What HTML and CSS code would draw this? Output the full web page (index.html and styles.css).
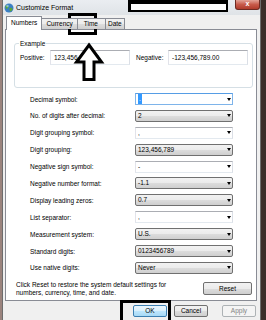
FILE: index.html
```html
<!DOCTYPE html>
<html lang="en">

<head>
    <meta charset="UTF-8">
    <meta name="viewport" content="width=device-width, initial-scale=1.0">
    <title>Customize Format</title>
    <link rel="stylesheet" href="styles.css">
</head>

<body>
    <div class="window">
        <div class="titlebar">
            <svg class="app-icon" width="10" height="10" viewBox="0 0 10 10">
                <circle cx="5" cy="5" r="4.5" fill="#3b7fc4" />
                <path d="M1.5 3 C2.5 1.8 4 2.2 4.6 3.4 C4.2 4.8 3.2 5 2.6 6.2 C2 5.2 1.2 4.2 1.5 3Z" fill="#5aa83a" />
                <path d="M5.4 5 C6.5 4.4 8 4.9 8.6 6 C8.2 7.4 7.1 8.4 6 8.6 C6 7.6 5 6.4 5.4 5Z" fill="#5aa83a" />
                <circle cx="3.5" cy="3" r="1.2" fill="#bfe3ff" opacity="0.6" />
            </svg>
            <span class="title">Customize Format</span>
            <span class="redact"></span>
            <span></span>
            <span class="close">x</span>
        </div>
        <div class="content">
            <div class="tabs">
                <div class="tab active">Numbers</div>
                <div class="tab">Currency</div>
                <div class="tab tab-time">Time</div>
                <div class="tab tab-date">Date</div>
            </div>
            <div class="panel">
                <fieldset class="example">
                    <legend>Example</legend>
                    <div class="example-row">
                        <label>Positive:</label>
                        <div class="text-box">123,456,789.00</div>
                        <label class="neg-label">Negative:</label>
                        <div class="text-box">-123,456,789.00</div>
                    </div>
                </fieldset>
                <div class="settings">
                    <label>Decimal symbol:</label>
                    <div class="combo edit focus"><span class="sel">.</span><span class="caret"></span></div>
                    <label>No. of digits after decimal:</label>
                    <div class="combo list"><span>2</span><span class="caret"></span></div>
                    <label>Digit grouping symbol:</label>
                    <div class="combo edit"><span>,</span><span class="caret"></span></div>
                    <label>Digit grouping:</label>
                    <div class="combo list"><span>123,456,789</span><span class="caret"></span></div>
                    <label>Negative sign symbol:</label>
                    <div class="combo edit"><span>-</span><span class="caret"></span></div>
                    <label>Negative number format:</label>
                    <div class="combo list"><span>-1.1</span><span class="caret"></span></div>
                    <label>Display leading zeros:</label>
                    <div class="combo list"><span>0.7</span><span class="caret"></span></div>
                    <label>List separator:</label>
                    <div class="combo edit"><span>,</span><span class="caret"></span></div>
                    <label>Measurement system:</label>
                    <div class="combo list"><span>U.S.</span><span class="caret"></span></div>
                    <label>Standard digits:</label>
                    <div class="combo list"><span>0123456789</span><span class="caret"></span></div>
                    <label>Use native digits:</label>
                    <div class="combo list"><span>Never</span><span class="caret"></span></div>
                </div>
                <div class="reset-row">
                    <p>Click Reset to restore the system default settings for<br>numbers, currency, time, and date.</p>
                    <button type="button" class="btn reset">Reset</button>
                </div>
            </div>
            <div class="dialog-buttons">
                <button type="button" class="btn default">OK</button>
                <button type="button" class="btn">Cancel</button>
                <button type="button" class="btn apply" disabled>Apply</button>
            </div>
        </div>
    </div>

    <!-- annotations drawn on top of the screenshot -->
    <div class="mark mark-tab"></div>
    <div class="mark mark-ok"></div>
    <svg class="arrow-mark" width="36" height="44" viewBox="0 0 36 44">
        <path d="M19 5 L31.5 22 L24 22 L24 39.5 L14 39.5 L14 22 L6.5 22 Z" fill="#fff" stroke="#000" stroke-width="3" />
    </svg>
</body>

</html>
```

FILE: styles.css
```css
* {
    padding: 0;
    margin: 0;
    box-sizing: border-box;
}

body {
    width: 266px;
    height: 320px;
    overflow: hidden;
    position: relative;
    background: linear-gradient(to right, #9b847e, #3a2d29);
    font-family: "Liberation Sans", Arial, sans-serif;
    font-size: 6.5px;
    color: #000;
}

.window {
    margin-left: 2px;
    width: 259px;
    height: 320px;
    border-left: 1px solid #6d6d6d;
    border-right: 1px solid #6d6d6d;
    background: #f0f0f0;
}

.titlebar {
    height: 15px;
    display: grid;
    grid-template-columns: 13px 112px 100px 1fr 25px;
    align-items: center;
    background: linear-gradient(#eaedf1, #dfe3e7);
}

.app-icon {
    margin-left: 1px;
}

.title {
    font-size: 7px;
}

.redact {
    align-self: start;
    height: 12px;
    background: #fff;
    border-style: solid;
    border-color: #000;
    border-width: 4px 2px 2px 3px;
}

.close {
    align-self: start;
    height: 10px;
    background: linear-gradient(#e3a397, #c75a4a 50%, #b03b2b);
    border: 1px solid #6d2a22;
    border-top: none;
    border-radius: 0 0 3px 3px;
    color: #fff;
    font-weight: bold;
    font-size: 7px;
    line-height: 8px;
    text-align: center;
}

.content {
    padding: 1px 3px 0 2px;
}

.tabs {
    display: flex;
    align-items: flex-end;
    height: 14px;
    margin-bottom: -1px;
    padding-left: 1px;
    position: relative;
    z-index: 1;
}

.tab {
    height: 11px;
    margin-bottom: 1px;
    margin-left: -1px;
    padding: 0 4px;
    line-height: 10px;
    font-size: 6.5px;
    border: 1px solid #898c95;
    border-bottom: none;
    background: linear-gradient(#f2f2f2, #ebebeb 50%, #dddddd 50%, #cfcfcf);
}

.tab.active {
    height: 14px;
    margin-bottom: 0;
    margin-left: 0;
    background: #fff;
    line-height: 12px;
}

.tab.tab-time {
    padding: 0 7px 0 6px;
}

.tab.tab-date {
    padding: 0 2px;
}

.panel {
    height: 272px;
    border: 1px solid #898c95;
    background: #fff;
    padding-top: 10px;
}

.example {
    margin: 0 4px 0 8px;
    border: 1px solid #d5dfe5;
    border-radius: 3px;
    padding: 3px 4px 22px 4px;
}

.example legend {
    padding: 0 1px;
    line-height: 7px;
}

.example-row {
    display: grid;
    grid-template-columns: 30px 80px 38px 80px;
    align-items: center;
    padding-left: 1px;
}

.neg-label {
    padding-left: 6px;
}

.text-box {
    height: 15px;
    line-height: 13px;
    padding-left: 3px;
    border: 1px solid #abadb3;
    border-color: #abadb3 #dbdfe6 #e3e9ef #e2e3ea;
}

.settings {
    margin-top: 5px;
    padding-left: 24px;
    display: grid;
    grid-template-columns: 105px 98px;
    row-gap: 4.9px;
    align-items: center;
}

.combo {
    height: 12px;
    line-height: 10px;
    display: flex;
    align-items: center;
    justify-content: space-between;
    padding: 0 1px 0 2px;
    border: 1px solid #707070;
}

.combo.list {
    border-radius: 2px;
    background: linear-gradient(#f2f2f2, #ebebeb 50%, #dddddd 50%, #cfcfcf);
}

.combo.edit {
    background: #fff;
    border-color: #abadb3 #dbdfe6 #e3e9ef #e2e3ea;
}

.combo.focus {
    border-color: #569de5 #7eb4ea #7eb4ea #7eb4ea;
}

.sel {
    background: #3399ff;
    color: #fff;
    padding: 0 1px;
}

.caret {
    width: 0;
    height: 0;
    border-left: 2.5px solid transparent;
    border-right: 2.5px solid transparent;
    border-top: 3px solid #000;
}

.reset-row {
    margin-top: 7px;
    display: flex;
    align-items: center;
    justify-content: space-between;
    padding: 0 4px 0 10px;
}

.reset-row p {
    line-height: 8px;
}

.btn {
    font: inherit;
    width: 34px;
    height: 12px;
    line-height: 10px;
    color: #000;
    border: 1px solid #707070;
    border-radius: 2px;
    background: linear-gradient(#f2f2f2, #ebebeb 50%, #dddddd 50%, #cfcfcf);
}

.btn.reset {
    width: 49px;
    height: 13px;
}

.btn.default {
    border-color: #3c7fb1;
    background: linear-gradient(#eaf6fd, #d9f0fc 50%, #bee6fd 50%, #a7d9f5);
}

.btn:disabled {
    color: #838383;
    border-color: #adb2b5;
    background: #f4f4f4;
}

.dialog-buttons {
    margin-top: 4px;
    display: flex;
    justify-content: flex-end;
    gap: 7px;
    padding-right: 1px;
}

.btn.apply {
    margin-left: 7px;
}

.mark {
    position: absolute;
    border: 3px solid #000;
}

.mark-tab {
    left: 68px;
    top: 13px;
    width: 29px;
    height: 22px;
}

.mark-ok {
    left: 120px;
    top: 300px;
    width: 51px;
    height: 24px;
}

.arrow-mark {
    position: absolute;
    left: 70px;
    top: 40px;
}
```
